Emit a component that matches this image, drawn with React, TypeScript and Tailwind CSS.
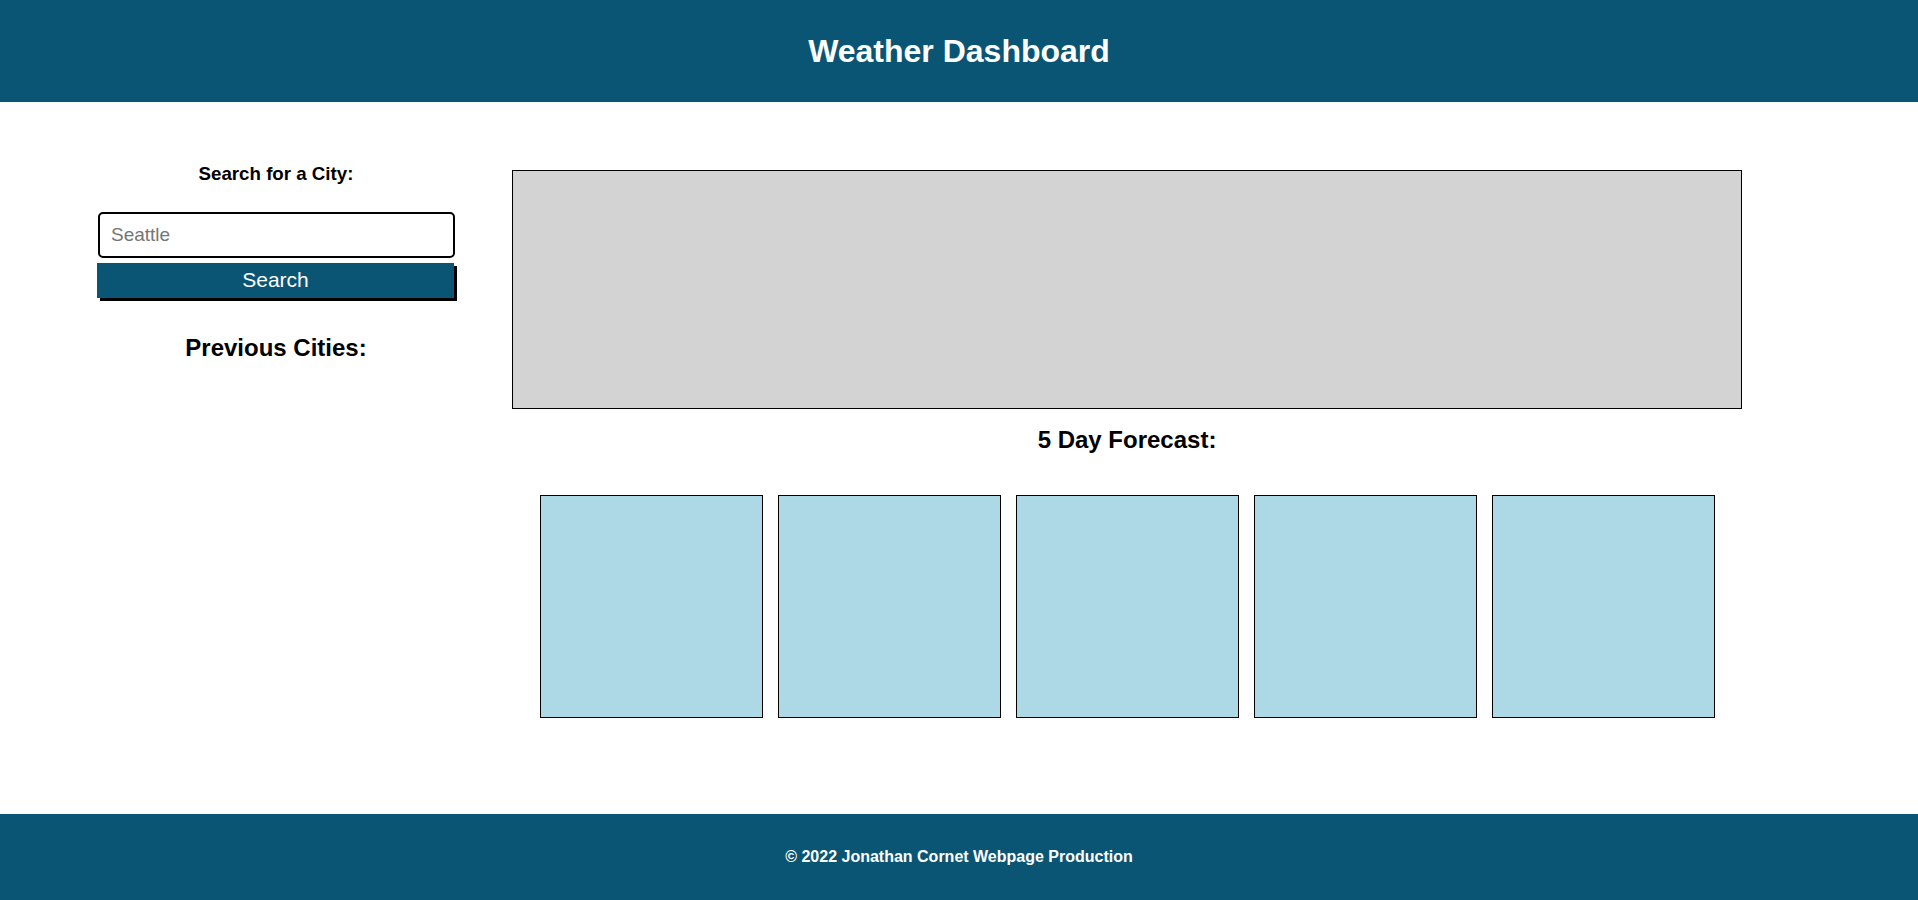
import React, { useState } from 'react';

const days = [1, 2, 3, 4, 5];

const App: React.FC = () => {
  const [city, setCity] = useState<string>('');

  return (
    <div className="min-h-screen flex flex-col bg-white text-black font-['Liberation_Sans',Arial,sans-serif]">
      <header className="h-[102px] bg-[#0b5574] flex items-center justify-center">
        <h1 className="text-[32px] leading-[37px] font-bold text-white">Weather Dashboard</h1>
      </header>

      <main className="flex-1 flex">
        {/* search column */}
        <aside className="ml-[97px] w-[358px] flex flex-col items-start pt-[61px]">
          <h3 className="self-center text-[18.72px] leading-[21.5px] font-bold">Search for a City:</h3>
          <input
            type="text"
            value={city}
            onChange={e => setCity(e.target.value)}
            placeholder="Seattle"
            className="mt-[27px] ml-[1px] w-[357px] h-[46px] border-2 border-black rounded-[5px] px-[11px] text-[19px] placeholder:text-[#757575] outline-none"
          />
          <button className="mt-[5px] w-[357px] h-[35px] pb-[2px] bg-[#0b5574] text-white text-[21px] leading-[33px] shadow-[3px_3px_0_0_#000]">
            Search
          </button>
          <h2 className="self-center mt-[36px] text-[24px] leading-[27.6px] font-bold">Previous Cities:</h2>
        </aside>

        {/* weather column */}
        <section className="ml-[57px] w-[1230px] pt-[68px]">
          <div className="h-[239px] w-full border border-black bg-[#d3d3d3]"></div>
          <h2 className="mt-[17px] text-center text-[24px] leading-[27.6px] font-bold">5 Day Forecast:</h2>
          <div className="mt-[41px] flex justify-center gap-[15px]">
            {days.map(d => (
              <div key={d} className="w-[223px] h-[223px] border border-black bg-[#add8e6]"></div>
            ))}
          </div>
        </section>
      </main>

      <footer className="h-[86px] bg-[#0b5574] flex items-center justify-center">
        <p className="text-[16px] font-bold text-white">© 2022 Jonathan Cornet Webpage Production</p>
      </footer>
    </div>
  );
};

export default App;
